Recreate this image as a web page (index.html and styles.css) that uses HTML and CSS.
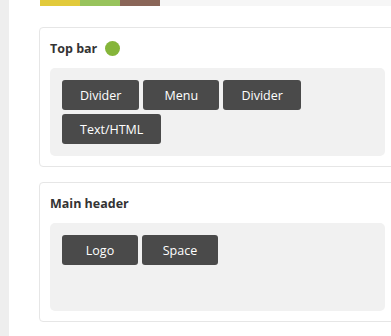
FILE: index.html
```html
<!DOCTYPE html>
<html lang="en">
<head>
  <meta charset="UTF-8">
  <meta name="viewport" content="width=device-width, initial-scale=1.0">
  <title>Header builder</title>
  <link rel="stylesheet" href="styles.css">
</head>
<body>
  <aside class="sidebar"></aside>
  <main class="content">
    <div class="color-bar">
      <span class="swatch swatch-yellow"></span>
      <span class="swatch swatch-green"></span>
      <span class="swatch swatch-brown"></span>
    </div>

    <section class="panel">
      <h2 class="panel-title">Top bar <span class="status-dot"></span></h2>
      <div class="drop-zone">
        <button class="element">Divider</button>
        <button class="element">Menu</button>
        <button class="element">Divider</button>
        <button class="element">Text/HTML</button>
      </div>
    </section>

    <section class="panel">
      <h2 class="panel-title">Main header</h2>
      <div class="drop-zone">
        <button class="element">Logo</button>
        <button class="element">Space</button>
      </div>
    </section>

    <section class="panel"></section>
  </main>
</body>
</html>
```

FILE: styles.css
```css
html {
  overflow: hidden;
}
body {
  margin: 0;
  padding: 0;
  display: flex;
  font-family: "Open Sans", Arial, sans-serif;
  background-color: #fff;
  color: #333;
}
.sidebar {
  width: 9px;
  flex-shrink: 0;
  min-height: 336px;
  background-color: #eeeeee;
}
.content {
  padding-left: 30px;
}
.color-bar {
  display: flex;
  width: 400px;
  height: 6px;
  margin-left: 1px;
  background-color: #f6f6f6;
}
.swatch {
  width: 40px;
  height: 100%;
}
.swatch-yellow {
  background-color: #e2ca3b;
}
.swatch-green {
  background-color: #98c35c;
}
.swatch-brown {
  background-color: #8a6658;
}
.panel {
  box-sizing: border-box;
  width: 357px;
  margin-top: 21px;
  margin-bottom: -6px;
  padding: 10px;
  border: 1px solid #e6e6e6;
  border-radius: 4px;
  background-color: #fff;
}
.panel-title {
  display: flex;
  align-items: center;
  gap: 8px;
  margin: 0 0 10px;
  height: 20px;
  font-size: 12.5px;
  font-weight: bold;
  color: #333;
}
.status-dot {
  width: 15px;
  height: 15px;
  border-radius: 50%;
  background-color: #85b53a;
}
.drop-zone {
  box-sizing: border-box;
  display: flex;
  flex-wrap: wrap;
  align-content: flex-start;
  gap: 4px;
  min-height: 88px;
  padding: 12px;
  border-radius: 5px;
  background-color: #f1f1f1;
}
.element {
  height: 30px;
  min-width: 76px;
  padding: 0 18px;
  border: none;
  border-radius: 3px;
  background-color: #4a4a4a;
  color: #fff;
  font-family: "Open Sans", Arial, sans-serif;
  font-size: 12.5px;
  cursor: pointer;
}
```
